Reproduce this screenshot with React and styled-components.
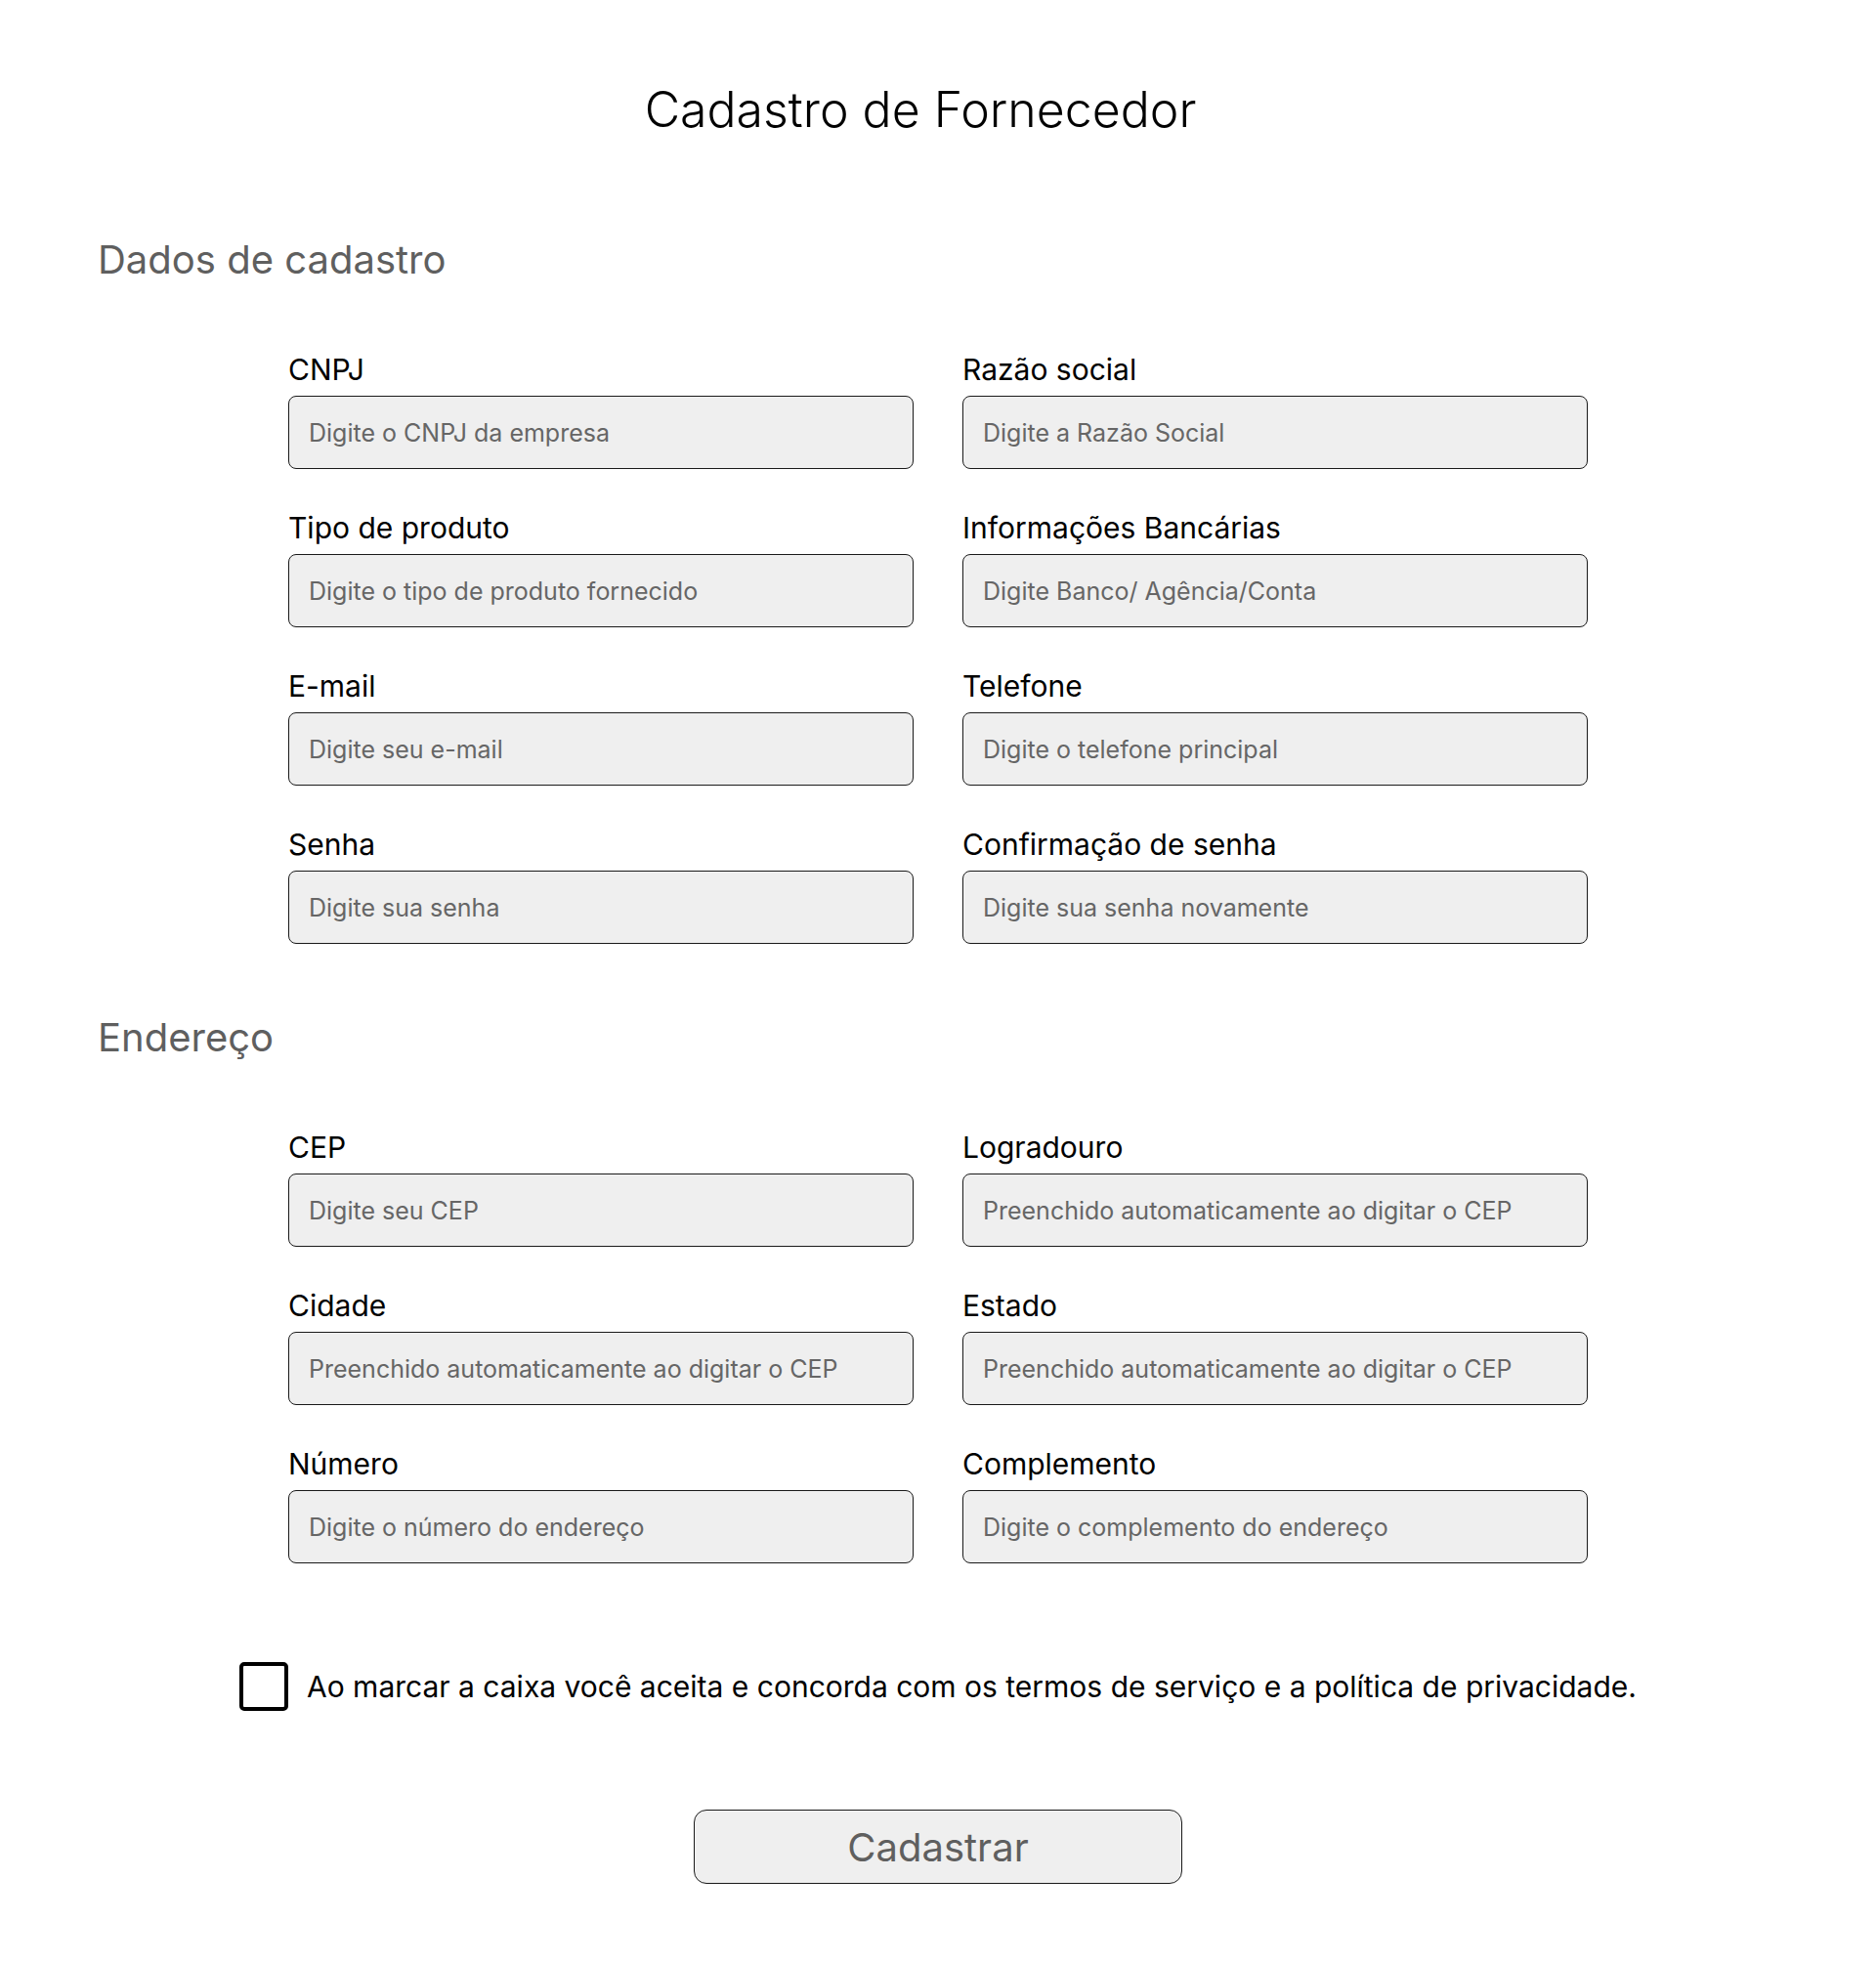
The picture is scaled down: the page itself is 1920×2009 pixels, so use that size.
import React, { useState } from "react";
import styled, { createGlobalStyle } from "styled-components";

const GlobalStyle = createGlobalStyle`
  body {
    margin: 0;
    background: #ffffff;
    font-family: Inter, "Noto Sans", sans-serif;
  }
`;

const Page = styled.div`
  padding: 82px 0 81px;
  color: #000000;
`;

const Title = styled.h1`
  margin: 0;
  padding-right: 36px;
  text-align: center;
  font-size: 50px;
  line-height: 60px;
  font-weight: 300;
`;

const Section = styled.section`
  margin-top: ${({ first }) => (first ? "100px" : "72px")};
`;

const SectionTitle = styled.h2`
  margin: 0;
  padding-left: 100px;
  font-size: 40px;
  line-height: 48px;
  font-weight: 400;
  color: #5f5f5f;
`;

const Grid = styled.div`
  width: 1330px;
  margin: 71px auto 0;
  display: grid;
  grid-template-columns: 640px 640px;
  column-gap: 50px;
  row-gap: 43px;
`;

const Field = styled.label`
  display: flex;
  flex-direction: column;
  gap: 10px;
`;

const Label = styled.span`
  font-size: 30px;
  line-height: 34px;
  color: #000000;
`;

const Input = styled.input`
  box-sizing: border-box;
  height: 75px;
  width: 100%;
  padding: 0 20px;
  border: 1px solid #1a1a1a;
  border-radius: 8px;
  background: #efefef;
  font-family: Inter, "Noto Sans", sans-serif;
  font-size: 25px;
  color: #222;
  outline: none;
  &::placeholder {
    color: #666666;
  }
`;

const TermsRow = styled.label`
  margin-top: 101px;
  display: flex;
  align-items: center;
  justify-content: center;
  gap: 19px;
  cursor: pointer;
`;

const Box = styled.span`
  box-sizing: border-box;
  width: 50px;
  height: 50px;
  border: 4px solid #000000;
  border-radius: 5px;
  display: flex;
  align-items: center;
  justify-content: center;
  font-size: 32px;
  line-height: 1;
`;

const TermsText = styled.span`
  font-size: 30px;
  line-height: 36px;
`;

const Actions = styled.div`
  margin-top: 101px;
  display: flex;
  justify-content: center;
`;

const SubmitButton = styled.button`
  box-sizing: border-box;
  width: 500px;
  height: 76px;
  border: 1px solid #1a1a1a;
  border-radius: 13px;
  background: #efefef;
  font-family: Inter, "Noto Sans", sans-serif;
  font-size: 40px;
  color: #5f5f5f;
  cursor: pointer;
`;

const dadosFields = [
  ["CNPJ", "Digite o CNPJ da empresa"],
  ["Razão social", "Digite a Razão Social"],
  ["Tipo de produto", "Digite o tipo de produto fornecido"],
  ["Informações Bancárias", "Digite Banco/ Agência/Conta"],
  ["E-mail", "Digite seu e-mail"],
  ["Telefone", "Digite o telefone principal"],
  ["Senha", "Digite sua senha"],
  ["Confirmação de senha", "Digite sua senha novamente"],
];

const auto = "Preenchido automaticamente ao digitar o CEP";

const enderecoFields = [
  ["CEP", "Digite seu CEP"],
  ["Logradouro", auto],
  ["Cidade", auto],
  ["Estado", auto],
  ["Número", "Digite o número do endereço"],
  ["Complemento", "Digite o complemento do endereço"],
];

const FieldGrid = ({ fields }) => (
  <Grid>
    {fields.map(([label, placeholder]) => (
      <Field key={label}>
        <Label>{label}</Label>
        <Input
          type={label.startsWith("Senha") || label.startsWith("Confirmação") ? "password" : "text"}
          placeholder={placeholder}
        />
      </Field>
    ))}
  </Grid>
);

const App = () => {
  const [accepted, setAccepted] = useState(false);

  return (
    <>
      <GlobalStyle />
      <Page>
        <Title>Cadastro de Fornecedor</Title>

        <Section first>
          <SectionTitle>Dados de cadastro</SectionTitle>
          <FieldGrid fields={dadosFields} />
        </Section>

        <Section>
          <SectionTitle>Endereço</SectionTitle>
          <FieldGrid fields={enderecoFields} />
        </Section>

        <TermsRow onClick={() => setAccepted(!accepted)}>
          <Box>{accepted ? "✓" : ""}</Box>
          <TermsText>
            Ao marcar a caixa você aceita e concorda com os termos de serviço e a política de privacidade.
          </TermsText>
        </TermsRow>

        <Actions>
          <SubmitButton type="button">Cadastrar</SubmitButton>
        </Actions>
      </Page>
    </>
  );
};

export default App;
